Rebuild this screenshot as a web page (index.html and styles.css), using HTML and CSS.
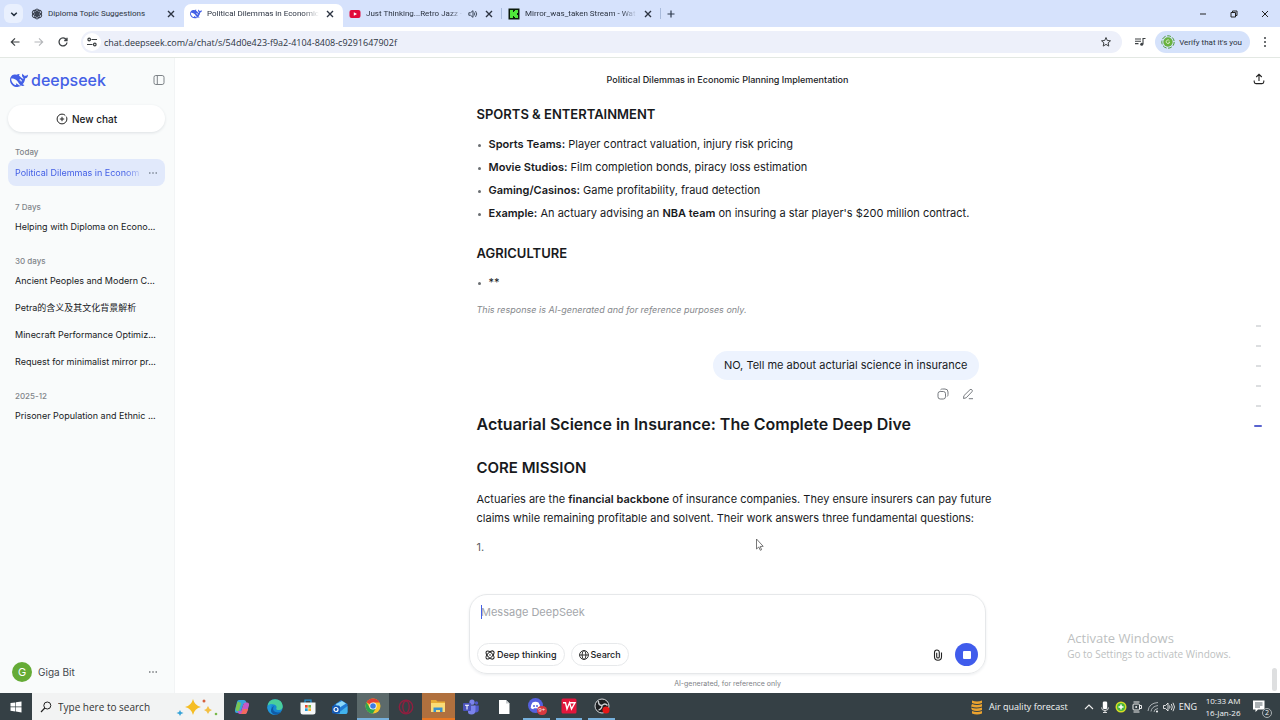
FILE: index.html
```html
<!DOCTYPE html>
<html lang="en">
<head>
<meta charset="utf-8">
<title>Political Dilemmas in Economic Planning Implementation</title>
<link rel="stylesheet" href="styles.css">
</head>
<body>
<svg class="defs" aria-hidden="true">
  <symbol id="whale" viewBox="0 3 24 18"><path fill="currentColor" d="M23.748 4.482c-.254-.124-.364.113-.512.234-.051.039-.094.09-.137.136-.372.397-.806.657-1.373.626-.829-.046-1.537.214-2.163.848-.133-.782-.575-1.248-1.247-1.548-.352-.156-.708-.311-.955-.65-.172-.241-.219-.51-.305-.774-.055-.16-.11-.323-.293-.35-.2-.031-.278.136-.356.276-.313.572-.434 1.202-.422 1.84.027 1.436.633 2.58 1.838 3.393.137.093.172.187.129.323-.082.28-.18.552-.266.833-.055.179-.137.217-.329.14a5.526 5.526 0 01-1.736-1.18c-.857-.828-1.631-1.742-2.597-2.458a11.365 11.365 0 00-.689-.471c-.985-.957.13-1.743.388-1.836.27-.098.093-.432-.779-.428-.872.004-1.67.295-2.687.684a3.055 3.055 0 01-.465.137 9.597 9.597 0 00-2.883-.102c-1.885.21-3.39 1.102-4.497 2.623C.082 8.606-.231 10.684.152 12.85c.403 2.284 1.569 4.175 3.36 5.653 1.858 1.533 3.997 2.284 6.438 2.14 1.482-.085 3.133-.284 4.994-1.86.47.234.962.327 1.78.397.63.059 1.236-.03 1.705-.128.735-.156.684-.837.419-.961-2.155-1.004-1.682-.595-2.113-.926 1.096-1.296 2.746-2.642 3.392-7.003.05-.347.007-.565 0-.845-.004-.17.035-.237.23-.256a4.173 4.173 0 001.545-.475c1.396-.763 1.96-2.015 2.093-3.517.02-.23-.004-.467-.247-.588zM11.581 18c-2.089-1.642-3.102-2.183-3.52-2.16-.392.024-.321.471-.235.763.09.288.207.486.371.739.114.167.192.416-.113.603-.673.416-1.842-.14-1.897-.167-1.361-.802-2.5-1.86-3.301-3.307-.774-1.393-1.224-2.887-1.298-4.482-.02-.386.093-.522.477-.592a4.696 4.696 0 011.529-.039c2.132.312 3.946 1.265 5.468 2.774.868.86 1.525 1.887 2.202 2.891.72 1.066 1.494 2.082 2.48 2.914.348.292.625.514.891.677-.802.09-2.14.11-3.054-.614zm1-6.44a.306.306 0 01.415-.287.302.302 0 01.2.288.306.306 0 01-.31.307.303.303 0 01-.304-.308zm3.11 1.596c-.2.081-.399.151-.59.16a1.245 1.245 0 01-.798-.254c-.274-.23-.47-.358-.552-.758a1.73 1.73 0 01.016-.588c.07-.327-.008-.537-.239-.727-.187-.156-.426-.199-.688-.199a.559.559 0 01-.254-.078c-.11-.114-.2-.26-.117-.446.028-.054.16-.186.192-.21.356-.202.767-.136 1.146.016.352.144.618.408 1.001.782.391.451.462.576.685.914.176.265.336.537.445.848.067.195-.019.354-.25.452z"/></symbol>
  <symbol id="close" viewBox="0 0 12 12"><path d="M3 3l6 6M9 3l-6 6" fill="none" stroke="currentColor" stroke-width="1.4"/></symbol>
  <symbol id="dots" viewBox="0 0 12 12"><g fill="currentColor"><circle cx="2.2" cy="6" r=".9"/><circle cx="6" cy="6" r=".9"/><circle cx="9.8" cy="6" r=".9"/></g></symbol>
</svg>

<header class="browser">
  <div class="tabstrip">
    <button class="tab-search" aria-label="Search tabs"><svg class="i12" viewBox="0 0 12 12"><path d="M3.2 4.8L6 7.4l2.8-2.6" fill="none" stroke="#23303f" stroke-width="1.5"/></svg></button>
    <div class="tabs">
      <div class="tab">
        <svg class="i12" viewBox="0 0 12 12"><g fill="none" stroke="#3b4250" stroke-width="1"><ellipse cx="6" cy="4" rx="2.3" ry="3" transform="rotate(0 6 6)"/><ellipse cx="6" cy="4" rx="2.3" ry="3" transform="rotate(60 6 6)"/><ellipse cx="6" cy="4" rx="2.3" ry="3" transform="rotate(120 6 6)"/><ellipse cx="6" cy="4" rx="2.3" ry="3" transform="rotate(180 6 6)"/><ellipse cx="6" cy="4" rx="2.3" ry="3" transform="rotate(240 6 6)"/><ellipse cx="6" cy="4" rx="2.3" ry="3" transform="rotate(300 6 6)"/></g></svg>
        <span class="tab-title">Diploma Topic Suggestions</span>
        <button aria-label="Close tab"><svg class="i12"><use href="#close"/></svg></button>
      </div>
      <div class="tab active">
        <svg class="i12 brand"><use href="#whale"/></svg>
        <span class="tab-title fade">Political Dilemmas in Economic</span>
        <button aria-label="Close tab"><svg class="i12"><use href="#close"/></svg></button>
      </div>
      <div class="tab">
        <svg class="i12" viewBox="0 0 12 12"><rect x=".5" y="2" width="11" height="8" rx="2" fill="#e1093a"/><path d="M4.8 4.2v3.6L8 6z" fill="#fff"/></svg>
        <span class="tab-title fade">Just Thinking...Retro Jazz -</span>
        <svg class="i10" viewBox="0 0 12 12"><path d="M1 4.5h2L6 2v8L3 7.500H1z" fill="none" stroke="#3b4658" stroke-width="1.2"/><path d="M7.500 4.200q1.400 1.800 0 3.600M9 2.500q3 3.500 0 7" fill="none" stroke="#3b4658" stroke-width="1.100"/></svg>
        <button aria-label="Close tab"><svg class="i12"><use href="#close"/></svg></button>
      </div>
      <div class="tab edged">
        <svg class="i12" viewBox="0 0 12 12"><path d="M.5.500h11v11H.500z" fill="#0b1a0b"/><path d="M2 2h3v2h1V3h1V2h3v3H9v2h1v3H7V9H6V8H5v2H2z" fill="#4fe53a"/></svg>
        <span class="tab-title fade">Mirror_was_taken Stream - Wat</span>
        <button aria-label="Close tab"><svg class="i12"><use href="#close"/></svg></button>
      </div>
      <button class="new-tab" aria-label="New tab"><svg class="i12" viewBox="0 0 12 12"><path d="M6 2.500v7M2.500 6h7" stroke="#2e3a4c" stroke-width="1.200"/></svg></button>
    </div>
    <div class="window-controls">
      <button aria-label="Minimise"><svg class="i12" viewBox="0 0 12 12"><path d="M3 6h6" stroke="#222" stroke-width="1"/></svg></button>
      <button aria-label="Restore"><svg class="i12" viewBox="0 0 12 12"><path d="M3 4.500h4.500V9H3zM4.500 4.500V3H9v4.500H7.500" fill="none" stroke="#222"/></svg></button>
      <button aria-label="Close window"><svg class="i12" viewBox="0 0 12 12"><path d="M3 3l6 6M9 3L3 9" stroke="#222"/></svg></button>
    </div>
  </div>
  <div class="toolbar">
    <nav class="nav-buttons">
      <button aria-label="Back"><svg class="i12" viewBox="0 0 12 12"><path d="M10.500 6h-8M6 2.300L2.300 6 6 9.700" fill="none" stroke="#3c4043" stroke-width="1.200"/></svg></button>
      <button aria-label="Forward"><svg class="i12" viewBox="0 0 12 12"><path d="M1.500 6h8M6 2.300L9.700 6 6 9.700" fill="none" stroke="#b4b6b9" stroke-width="1.100"/></svg></button>
      <button aria-label="Reload"><svg class="i12" viewBox="0 0 12 12"><path d="M9.300 3.600A4 4 0 1 0 10 6.500M10 1.800v2.700H7.200" fill="none" stroke="#3c4043" stroke-width="1.300"/></svg></button>
    </nav>
    <div class="omnibox">
      <button class="site-info" aria-label="Site information"><svg class="i12" viewBox="0 0 12 12"><g fill="none" stroke="#3c4043" stroke-width="1.200"><path d="M5.500 3.500H11M1 8.500h5.500"/><circle cx="3.200" cy="3.500" r="1.300"/><circle cx="8.800" cy="8.500" r="1.300"/></g></svg></button>
      <input class="url" aria-label="Address" value="chat.deepseek.com/a/chat/s/54d0e423-f9a2-4104-8408-c9291647902f">
      <button aria-label="Bookmark"><svg class="i12" viewBox="0 0 12 12"><path d="M6 1.500l1.300 3 3.200.3-2.400 2.100.7 3.200L6 8.400l-2.800 1.700.7-3.200L1.500 4.800l3.200-.3z" fill="none" stroke="#3c4043" stroke-width="1"/></svg></button>
    </div>
    <button aria-label="Media"><svg class="i12" viewBox="0 0 12 12"><path d="M1 3h6M1 5.300h6M1 7.600h3.500M9 8V2.500h2.500" fill="none" stroke="#3c4043" stroke-width="1.100"/><circle cx="7.700" cy="8.300" r="1.500" fill="#3c4043"/></svg></button>
    <button class="verify"><svg class="i14" viewBox="0 0 14 14"><circle cx="7" cy="7" r="6.200" fill="none" stroke="#4f9b3d" stroke-dasharray="4 1.500"/><circle cx="7" cy="7" r="4.700" fill="#69b23d"/><path d="M8.500 5.800a1.800 1.800 0 1 0 .2 1.400H7.300" fill="none" stroke="#e8f5dd" stroke-width=".8"/></svg>Verify that it's you</button>
    <button aria-label="Browser menu"><svg class="i12" viewBox="0 0 12 12"><g fill="#3c4043"><circle cx="6" cy="2" r="1"/><circle cx="6" cy="6" r="1"/><circle cx="6" cy="10" r="1"/></g></svg></button>
  </div>
</header>

<div class="app">
  <aside class="sidebar">
    <div class="side-head">
      <a class="logo" href="#"><svg class="whale"><use href="#whale"/></svg>deepseek</a>
      <button aria-label="Collapse sidebar"><svg class="i12" viewBox="0 0 12 12"><rect x="1" y="1.500" width="10" height="9" rx="1.800" fill="none" stroke="#7d8287"/><path d="M4.300 1.500v9" stroke="#7d8287"/></svg></button>
    </div>
    <button class="new-chat"><svg class="i12" viewBox="0 0 12 12"><circle cx="6" cy="6" r="4.900" fill="none" stroke="#222" stroke-dasharray="26 1.500 3.300 0"/><path d="M6 3.800v4.400M3.800 6h4.400" stroke="#222"/></svg>New chat</button>
    <nav class="history">
      <h4>Today</h4>
      <div class="row current"><a class="fade" href="#">Political Dilemmas in Econom</a><button aria-label="Chat options"><svg class="i10"><use href="#dots"/></svg></button></div>
      <h4>7 Days</h4>
      <div class="row"><a href="#">Helping with Diploma on Econo...</a></div>
      <h4>30 days</h4>
      <div class="row"><a href="#">Ancient Peoples and Modern C...</a></div>
      <div class="row"><a href="#">Petra的含义及其文化背景解析</a></div>
      <div class="row"><a href="#">Minecraft Performance Optimiz...</a></div>
      <div class="row"><a href="#">Request for minimalist mirror pr...</a></div>
      <h4>2025-12</h4>
      <div class="row"><a href="#">Prisoner Population and Ethnic ...</a></div>
    </nav>
    <div class="account"><span class="avatar">G</span><span class="name">Giga Bit</span><button aria-label="Account options"><svg class="i10"><use href="#dots"/></svg></button></div>
  </aside>

  <main class="main">
    <div class="chat-head">
      <h1>Political Dilemmas in Economic Planning Implementation</h1>
      <button class="share" aria-label="Share"><svg class="i12" viewBox="0 0 12 12"><path d="M6 8V1.500M3.200 4L6 1.300 8.800 4M1.200 7.500v1.300q0 1.800 1.800 1.800h6q1.800 0 1.800-1.800V7.500" fill="none" stroke="#222" stroke-width="1.100"/></svg></button>
    </div>
    <div class="thread">
      <article class="answer">
        <h3>SPORTS &amp; ENTERTAINMENT</h3>
        <ul>
          <li><strong>Sports Teams:</strong> Player contract valuation, injury risk pricing</li>
          <li><strong>Movie Studios:</strong> Film completion bonds, piracy loss estimation</li>
          <li><strong>Gaming/Casinos:</strong> Game profitability, fraud detection</li>
          <li><strong>Example:</strong> An actuary advising an <strong>NBA team</strong> on insuring a star player's $200 million contract.</li>
        </ul>
        <h3>AGRICULTURE</h3>
        <ul><li>**</li></ul>
        <p class="note">This response is AI-generated and for reference purposes only.</p>
      </article>
      <div class="question">
        <p class="bubble">NO, Tell me about acturial science in insurance</p>
        <div class="actions">
          <button aria-label="Copy"><svg class="i12" viewBox="0 0 12 12"><rect x="1" y="3.500" width="7.500" height="7.500" rx="2.200" fill="none" stroke="#777b80"/><path d="M3.500 1.800Q4.200 1 5.500 1H8q3 0 3 3v2.500q0 1.300-.8 2" fill="none" stroke="#777b80"/></svg></button>
          <button aria-label="Edit"><svg class="i12" viewBox="0 0 12 12"><path d="M1.500 10.500l.4-2.800L8 1.700q1-.8 1.900.1t.1 1.900L4.200 9.800zM6.800 10.700H11" fill="none" stroke="#777b80" stroke-linejoin="round"/></svg></button>
        </div>
      </div>
      <article class="answer">
        <h2>Actuarial Science in Insurance: The Complete Deep Dive</h2>
        <h3 class="section">CORE MISSION</h3>
        <p>Actuaries are the <strong>financial backbone</strong> of insurance companies. They ensure insurers can pay future<br>claims while remaining profitable and solvent. Their work answers three fundamental questions:</p>
        <p class="marker">1.</p>
      </article>
    </div>
    <form class="composer">
      <textarea rows="1" aria-label="Message DeepSeek" placeholder="Message DeepSeek"></textarea>
      <span class="caret"></span>
      <div class="tools">
        <button type="button" class="chip"><svg class="i10" viewBox="0 0 12 12"><g fill="none" stroke="#222" stroke-width="1.200"><ellipse cx="6" cy="6" rx="6" ry="3" transform="rotate(45 6 6)"/><ellipse cx="6" cy="6" rx="6" ry="3" transform="rotate(-45 6 6)"/></g><circle cx="6" cy="6" r="1" fill="#222"/></svg>Deep thinking</button>
        <button type="button" class="chip"><svg class="i10" viewBox="0 0 12 12"><g fill="none" stroke="#222" stroke-width="1.100"><circle cx="6" cy="6" r="5.300"/><ellipse cx="6" cy="6" rx="2.300" ry="5.300"/><path d="M.700 6h10.600"/></g></svg>Search</button>
        <button type="button" class="attach" aria-label="Attach file"><svg class="i12" viewBox="0 0 12 12"><path d="M9.500 3.500v4.200a3.500 3.500 0 0 1-7 0V3.400a2.400 2.400 0 0 1 4.800 0v4.300a1.300 1.300 0 0 1-2.600 0V3.800" fill="none" stroke="#222" stroke-width="1.100"/></svg></button>
        <button type="button" class="stop" aria-label="Stop"><svg class="i10" viewBox="0 0 10 10"><rect x="1" y="1" width="8" height="8" rx="1" fill="#fff"/></svg></button>
      </div>
    </form>
    <p class="disclaimer">AI-generated, for reference only</p>

    <div class="ticks"><i></i><i></i><i></i><i></i><i></i><i class="on"></i></div>
    <div class="scroll-thumb"></div>
    <div class="watermark"><p class="big">Activate Windows</p><p>Go to Settings to activate Windows.</p></div>
    <svg class="cursor" viewBox="0 0 9 14"><path d="M1.500 1v10l2.300-2 1.500 3.300 1.300-.6L5.200 8.500l3-.2z" fill="#fff" stroke="#555" stroke-width=".8"/></svg>
  </main>
</div>

<footer class="taskbar">
  <button class="start" aria-label="Start"><svg class="i12" viewBox="0 0 12 12"><path d="M.5 2.100L5.400 1.400v4.200H.500zM6 1.300L11.500.500v5.100H6zM.500 6.200h4.900v4.300L.500 9.800zM6 6.200h5.500v5.200L6 10.600z" fill="#fff"/></svg></button>
  <label class="search">
    <svg class="i12" viewBox="0 0 12 12"><circle cx="7.300" cy="4.500" r="3.500" fill="none" stroke="#222"/><path d="M4.800 7L1 11" stroke="#222" stroke-width="1.100"/></svg>
    <input placeholder="Type here to search" aria-label="Type here to search">
    <svg class="sparkles" viewBox="0 0 42 18"><path d="M17 1q1.500 6.500 8 8-6.500 1.500-8 8-1.500-6.500-8-8 6.500-1.500 8-8z" fill="#f5bd24"/><path d="M32 8q.8 3 4 4-3.200 1-4 4-.8-3-4-4 3.200-1 4-4z" fill="#f3c044"/><path d="M4 12l1 2 2.500 1L5 16l-1 2-1-2-2.500-1L3 14z" fill="#35a2d8"/><circle cx="28" cy="3" r="1.500" fill="#d6613d"/><circle cx="40" cy="16" r="1.300" fill="#78b84a"/></svg>
  </label>
  <div class="apps">
    <button aria-label="Copilot"><svg class="i16" viewBox="0 0 16 16"><path d="M5 1h5q1.500 0 2 1.500L13 5H9.500L7 12q-.5 2-2.500 2H3q-2.500 0-2-3L3 3q.5-2 2-2z" fill="#34a5dc"/><path d="M2 8l1.700-5.500L7 4l-2 8H3q-2 0-1-4z" fill="#7ac653"/><path d="M11 15H6q-1.500 0-2-1.500L3.500 12H7l2.500-7q.5-1.500 2-1.500H13q2.500 0 2 3l-2 6.500q-.5 2-2 2z" fill="#c25ac4"/><path d="M6 15q1.500 0 2-2l1-3h5.200L13 13q-.5 2-2 2z" fill="#f26a5d"/></svg></button>
    <button aria-label="Edge"><svg class="i16" viewBox="0 0 16 16"><circle cx="8" cy="8" r="7.700" fill="#1688d3"/><path d="M.500 7Q1.500.500 8 .300q7 .2 7.700 6.700.2 4.500-4.700 4-2.500-.3-1.500-2 .6-2.500-2.500-3.500Q3 4.500.500 7z" fill="#49ce9c"/><path d="M.300 8Q2 4.500 6 5q-3 2.500-1.500 6.500 2 3.500 6.500 3-6 3-9.500-2Q.300 10.500.300 8z" fill="#2199dc"/><path d="M7 7q-2.500 4 1.500 6 3 1.200 5.500-.5-2 3-5.500 3.200-5-.8-4.500-5Q5 7.500 7 7z" fill="#115ba7"/></svg></button>
    <button aria-label="Store"><svg class="i16" viewBox="0 0 16 16"><path d="M5 4V1.200h6V4" fill="none" stroke="#2693d4" stroke-width="1.300"/><path d="M.500 3.500h15V13q0 2.500-2.500 2.500H3Q.500 15.500.500 13z" fill="#f5f7f8"/><path d="M5 6h2.700v2.700H5z" fill="#e84c31"/><path d="M8.300 6H11v2.700H8.300z" fill="#7bb740"/><path d="M5 9.300h2.700V12H5z" fill="#249edb"/><path d="M8.300 9.300H11V12H8.300z" fill="#f3b52b"/></svg></button>
    <button aria-label="Outlook"><svg class="i16" viewBox="0 0 16 16"><path d="M2 6l7-5 6.500 4v8q0 2-2 2H5q-2 0-2-2z" fill="#207bd4"/><path d="M4 5l6-3 4 2.500L5.500 10z" fill="#8cd9fa"/><path d="M5 15l10.500-8v6q0 2-2 2z" fill="#42b3ed"/><rect y="6.500" width="8" height="8" rx="1.500" fill="#1459b5"/><circle cx="4" cy="10.500" r="2" fill="none" stroke="#fff" stroke-width="1.200"/></svg></button>
    <button class="open focused" aria-label="Chrome"><svg class="i16" viewBox="0 0 16 16"><circle cx="8" cy="8" r="7.500" fill="#f9c529"/><path d="M8 8L1.500 4.300A7.500 7.500 0 0 1 14.600 4.500H8z" fill="#e34133"/><path d="M1.500 4.300A7.500 7.500 0 0 0 7.800 15.500L11.200 9.700 8 8 4.800 9.800z" fill="#2da450"/><circle cx="8" cy="8" r="3.600" fill="#fff"/><circle cx="8" cy="8" r="2.800" fill="#3c7ce4"/></svg></button>
    <button aria-label="Opera GX"><svg class="i16" viewBox="0 0 16 16"><circle cx="8" cy="8" r="6.700" fill="none" stroke="#8f1f3f" stroke-width="1.400"/><ellipse cx="8" cy="8" rx="3.200" ry="5.800" fill="none" stroke="#8f1f3f" stroke-width="1.300"/></svg></button>
    <button class="alert" aria-label="File Explorer"><svg class="i16" viewBox="0 0 16 16"><path d="M1 2h5l1.500 1.500H15V14H1z" fill="#e9ad35"/><path d="M1 5h14v9H1z" fill="#fbdc76"/><path d="M3.500 14V9.500h9V14H10v-2H6v2z" fill="#3b91cd"/></svg></button>
    <button aria-label="Teams"><svg class="i16" viewBox="0 0 16 16"><circle cx="9" cy="3.200" r="2.600" fill="#7b83eb"/><circle cx="13.500" cy="4" r="1.700" fill="#5059c9"/><path d="M11 6.500h4.800v4q0 3-3 3H11z" fill="#5059c9"/><path d="M5 6.500h7.500V11q0 4.500-4 4.500T5 12z" fill="#7b83eb"/><rect y="4" width="8" height="8" rx="1" fill="#4b53bc"/><path d="M2 6.200h4M4 6.200v4.300" stroke="#fff" stroke-width="1.100"/></svg></button>
    <button aria-label="Document"><svg class="i16" viewBox="0 0 16 16"><path d="M3 1h7l3.500 3.500V15H3z" fill="#fff"/><path d="M10 1v3.500h3.500z" fill="#c9cdd0"/></svg></button>
    <button class="open" aria-label="Discord"><svg class="i16" viewBox="0 0 16 16"><circle cx="7.500" cy="7.500" r="7.500" fill="#5560df"/><path d="M4.500 4.500q3-1.300 6 0 1.800 2.500 1.800 5.500-1 1-2.500 1.200L9 10.200H6l-.8 1Q3.700 11 2.700 10q0-3 1.800-5.500z" fill="#fff"/><circle cx="6" cy="8" r="1" fill="#5560df"/><circle cx="9" cy="8" r="1" fill="#5560df"/></svg><span class="count">9+</span></button>
    <button class="open" aria-label="WPS Office"><svg class="i16" viewBox="0 0 16 16"><rect x=".5" y=".5" width="15" height="15" rx="1.500" fill="#e2163c"/><path d="M2 4.800h2.500L6 11l2.500-6.200L10.500 11l3.500-6.200H8" fill="none" stroke="#fff" stroke-width="1.400"/></svg></button>
    <button class="open" aria-label="OBS Studio"><svg class="i16" viewBox="0 0 16 16"><circle cx="8" cy="8" r="7" fill="#1d1f21" stroke="#d5d8da" stroke-width="1"/><path d="M8 7.500Q4 7 4.500 3M8 7.500q3-3 5.500 0M8 7.500Q8 11 4.500 12" fill="none" stroke="#cfd2d4" stroke-width="1.300"/><circle cx="12" cy="12" r="3.500" fill="#e61616"/></svg></button>
  </div>
  <div class="tray">
    <button class="weather"><svg class="i16" viewBox="0 0 16 16"><path d="M3 1.500q5 2 10 0v2.500q-5 2-10 0zM3 5q5 2 10 0v2.500q-5 2-11 0zM2 8.500q5 2 11 0V11q-5 2-10 0zM3 12q5 2 10 0v2.500q-5 2-10 0z" fill="#eba32f"/></svg>Air quality forecast</button>
    <button aria-label="Hidden icons"><svg class="i12" viewBox="0 0 12 12"><path d="M2 8l4-4 4 4" fill="none" stroke="#eee" stroke-width="1.100"/></svg></button>
    <button aria-label="Microphone"><svg class="i12" viewBox="0 0 12 12"><rect x="3.800" y=".5" width="4.400" height="7.500" rx="1.300" fill="#fff"/><path d="M2.500 6.500q0 3 3.500 3t3.500-3M6 9.500v2M4 11.500h4" fill="none" stroke="#ddd"/></svg></button>
    <button aria-label="Updates"><svg class="i12" viewBox="0 0 12 12"><circle cx="6" cy="6" r="5.500" fill="#d9df24"/><circle cx="6" cy="6" r="4" fill="#49b53c"/><path d="M6 3.500v5M3.500 6h5" stroke="#fff" stroke-width="1.500"/></svg></button>
    <button aria-label="Power"><svg class="i12" viewBox="0 0 12 12"><path d="M2.500 1h6M2.500 11h6M8.500 4.500h2v3h-2" fill="none" stroke="#eee"/><rect x="2" y="3" width="6.500" height="6" rx="1" fill="none" stroke="#eee"/><circle cx="5.200" cy="6" r="1" fill="#eee"/></svg></button>
    <button aria-label="Network"><svg class="i12" viewBox="0 0 12 12"><g fill="none" stroke="#aab0b3"><path d="M1 10Q2 2 11 1.500M4 10.500q.5-5 7-6M7 11q0-3 4-3.500"/></g><circle cx="10" cy="10.500" r="1" fill="#fff"/></svg></button>
    <button aria-label="Volume"><svg class="i12" viewBox="0 0 12 12"><path d="M.500 4.500h2L5 2v8L2.500 7.500h-2zM6.500 4.500q1 1.500 0 3M8.300 3q2 3 0 6M10 1.800q3 4.200 0 8.400" fill="none" stroke="#eee" stroke-width=".9"/></svg></button>
    <button class="lang">ENG</button>
    <button class="clock"><span>10:33 AM</span><span>16-Jan-26</span></button>
    <button class="notices" aria-label="2 notifications"><svg class="i16" viewBox="0 0 16 16"><path d="M1 1.500h11.500v9H6L3.500 13v-2.500H1z" fill="#fff"/><path d="M3 4h7.500M3 6h7.500M3 8h5" stroke="#46535a" stroke-width=".9"/></svg><span class="badge">2</span></button>
  </div>
</footer>
</body>
</html>
```

FILE: styles.css
```css
* { box-sizing: border-box; }

body {
  --brand: #4460e6;
  --ui: "Open Sans", "Noto Sans", sans-serif;
  margin: 0;
  min-height: 100vh;
  display: flex;
  flex-direction: column;
  background: #fff;
  color: #181a1d;
  font-family: Inter, "Noto Sans CJK SC", sans-serif;
  font-size: 11px;
  overflow: hidden;
}

h1, h2, h3, h4, p, ul { margin: 0; padding: 0; }
button, input, textarea { font: inherit; color: inherit; background: none; border: 0; padding: 0; margin: 0; outline: 0; }
button { display: flex; align-items: center; justify-content: center; flex: none; }
a { color: inherit; text-decoration: none; }
svg { display: block; flex: none; }

.defs { position: absolute; width: 0; height: 0; }
.i10 { width: 10px; height: 10px; }
.i12 { width: 12px; height: 12px; }
.i14 { width: 14px; height: 14px; }
.i16 { width: 16px; height: 16px; }
.brand { color: var(--brand); }
.fade { -webkit-mask-image: linear-gradient(90deg, #000 86%, transparent); mask-image: linear-gradient(90deg, #000 86%, transparent); }

/* Browser chrome */
.browser { font-family: var(--ui); font-size: 9px; color: #2c3442; }
.tabstrip { display: flex; align-items: flex-start; height: 27px; background: #d6e2fc; padding-left: 4px; }
.tab-search { width: 19px; height: 19px; margin-top: 4px; border-radius: 6px; background: #e9f0fe; }
.tabs { display: flex; flex: 1; min-width: 0; padding-left: 2px; }
.tab { display: flex; align-items: center; gap: 5px; flex: 0 1 159px; min-width: 0; height: 23px; margin-top: 4px; padding: 0 7px 4px 6px; font-family: Roboto, sans-serif; font-size: 8px; }
.tab.active { background: #fff; border-radius: 7px 7px 0 0; }
.tab.edged { position: relative; }
.tab.edged::before, .tab.edged::after { content: ""; position: absolute; top: 4px; width: 1px; height: 11px; background: #a9bbdc; }
.tab.edged::before { left: -1px; }
.tab.edged::after { right: 0; }
.tab-title { flex: 1; min-width: 0; overflow: hidden; white-space: nowrap; }
.new-tab { width: 20px; height: 27px; }
.window-controls { display: flex; height: 27px; gap: 19px; padding-right: 9px; }
.toolbar { display: flex; align-items: center; height: 31px; padding: 0 9px; border-bottom: 1px solid #e3e8e3; }
.nav-buttons { display: flex; gap: 12px; margin-right: 12px; }
.omnibox { display: flex; align-items: center; flex: 1; height: 22px; border-radius: 11px; background: #edf0fa; padding: 0 10px 0 2px; }
.site-info { width: 18px; height: 18px; border-radius: 9px; background: #fff; margin-right: 3px; }
.url { flex: 1; min-width: 0; }
.omnibox + button { margin: 0 9px 0 12px; }
.verify { height: 22px; gap: 4px; padding: 0 8px 0 6px; border-radius: 11px; background: #d5e2fb; font-family: Roboto, sans-serif; font-size: 8px; margin-right: 9px; }

/* Application frame */
.app { flex: 1; display: flex; min-height: 0; }
.sidebar { display: flex; flex-direction: column; width: 175px; flex: none; padding: 12px 9px 10px 8px; background: #f9fbfb; border-right: 1px solid #f2f4f5; }
.side-head { display: flex; align-items: center; justify-content: space-between; height: 20px; padding-left: 2px; }
.logo { display: flex; align-items: center; gap: 3px; color: var(--brand); font-family: Inter, sans-serif; font-size: 16px; line-height: 20px; font-weight: 500; }
.whale { width: 18px; height: 15px; }
.new-chat { height: 27px; margin: 15px 0 13px; gap: 4px; border-radius: 14px; background: #fff; box-shadow: 0 1px 3px #dde1e4; font-size: 10px; font-weight: 500; }
.history { flex: 1; font-size: 9px; }
.history h4 { height: 27px; padding: 15px 7px 0; font-size: 8px; line-height: 12px; font-weight: 500; color: #81858a; }
.history h4:first-child { height: 14px; padding-top: 1px; }
.row { display: flex; align-items: center; height: 27px; padding: 0 7px; border-radius: 8px; }
.row a { flex: 1; min-width: 0; overflow: hidden; white-space: nowrap; line-height: 16px; }
.row.current { background: #e1e9fb; color: var(--brand); }
.row button { color: #596370; margin-left: 5px; }
.account { display: flex; align-items: center; gap: 6px; height: 22px; padding: 0 7px 0 4px; font-size: 10px; color: #44484d; }
.account .name { flex: 1; }
.avatar { width: 20px; height: 20px; border-radius: 10px; background: #65ab36; color: #fff; text-align: center; line-height: 20px; font-size: 11px; }

/* Conversation */
.main { position: relative; flex: 1; min-width: 0; display: flex; flex-direction: column; align-items: center; padding: 0 1px; }
.chat-head { display: flex; align-items: center; justify-content: center; align-self: stretch; height: 42px; position: relative; }
.chat-head h1 { font-size: 9px; font-weight: 500; }
.share { position: absolute; right: 14px; top: 15px; }
.thread { flex: 1; width: 100%; max-width: 502px; min-height: 0; line-height: 19px; }
.answer p { white-space: nowrap; }
.answer h3 { font-size: 13px; line-height: 20px; font-weight: 600; padding: 4px 0 11px; }
.answer ul { list-style: none; }
.answer li { position: relative; padding-left: 12px; margin-bottom: 4px; }
.answer li::before { content: ""; position: absolute; left: 1px; top: 9px; width: 3px; height: 3px; border-radius: 2px; background: #6a6e72; }
.answer ul + h3 { padding: 16px 0 10px; }
.answer strong { font-weight: 600; }
.answer .note { font-size: 9px; font-style: italic; color: #85888c; margin-top: 8px; }
.question { display: flex; flex-direction: column; align-items: flex-end; padding-top: 32px; }
.bubble { padding: 5px 11px; border-radius: 15px; background: #edf3fe; }
.actions { display: flex; gap: 13px; padding: 8px 5px 0 0; }
.answer h2 { font-size: 16px; line-height: 24px; font-weight: 600; padding-top: 12px; }
.answer .section { font-size: 15px; padding: 22px 0 12px; }
.answer .marker { padding-top: 10px; color: #5d6165; }

.composer { position: relative; width: 100%; max-width: 517px; padding: 8px 7px 7px; border: 1px solid #e6e8ea; border-radius: 18px; box-shadow: 0 1px 3px #eceef0; }
.composer textarea { display: block; width: 100%; height: 40px; padding: 0 4px; resize: none; line-height: 19px; overflow: hidden; }
.composer textarea::placeholder { color: #a4a7ab; opacity: 1; }
.caret { position: absolute; left: 11px; top: 10px; width: 1px; height: 14px; background: var(--brand); }
.tools { display: flex; align-items: center; gap: 6px; }
.chip { height: 23px; padding: 0 7px; gap: 2px; border: 1px solid #e7e9eb; border-radius: 12px; font-size: 9px; font-weight: 500; }
.attach { margin-left: auto; margin-right: 5px; }
.stop { width: 23px; height: 23px; border-radius: 12px; background: #405cec; }
.disclaimer { height: 19px; line-height: 20px; font-size: 7px; color: #7e8287; }

.ticks { position: absolute; right: 18px; top: 267px; display: flex; flex-direction: column; align-items: center; gap: 18px; width: 8px; }
.ticks i { width: 5px; height: 2px; background: #dcdee0; }
.ticks .on { width: 8px; background: #5963cf; border-radius: 1px; }
.scroll-thumb { position: absolute; right: 3px; bottom: 2px; width: 5px; height: 23px; border-radius: 3px; background: #dedfe0; }
.watermark { position: absolute; right: 49px; bottom: 32px; font-family: var(--ui); font-size: 10px; line-height: 14px; color: #bdbfc1; white-space: nowrap; }
.watermark .big { font-size: 13px; line-height: 17px; }
.cursor { position: absolute; left: 580px; top: 480px; width: 9px; height: 14px; }

/* Taskbar */
.taskbar { display: flex; height: 27px; background: #354045; color: #f3f5f6; font-family: var(--ui); font-size: 9px; }
.start { width: 32px; }
.search { display: flex; align-items: center; width: 192px; padding: 0 6px 0 8px; gap: 6px; background: #f2f3f3; color: #333; font-size: 10px; }
.search input { flex: 1; min-width: 0; }
.search input::placeholder { color: #333; opacity: 1; }
.sparkles { width: 42px; height: 18px; }
.apps { display: grid; grid-template-columns: repeat(12, 1fr); width: 392px; margin-left: 2px; }
.apps button { position: relative; }
.open { border-bottom: 2px solid #76b0dc; margin: 0 3px; }
.focused { background: #5c6a6b; margin: 0; }
.alert { background: #b0703e; border-bottom: 2px solid #e87722; }
.count, .badge { position: absolute; border-radius: 5px; text-align: center; }
.count { right: 3px; bottom: 3px; width: 10px; height: 9px; background: #d8393f; font-size: 6px; line-height: 9px; }
.tray { display: flex; align-items: center; margin-left: auto; gap: 4px; padding-right: 12px; }
.weather { gap: 4px; margin-right: 11px; }
.lang { font-size: 9px; }
.clock { flex-direction: column; width: 40px; margin: 0 5px 0 2px; font-size: 8px; line-height: 12px; }
.notices { position: relative; }
.badge { right: -4px; bottom: -3px; width: 10px; height: 10px; background: #354045; border: 1px solid #aab0b3; font-size: 7px; line-height: 8px; }
```
